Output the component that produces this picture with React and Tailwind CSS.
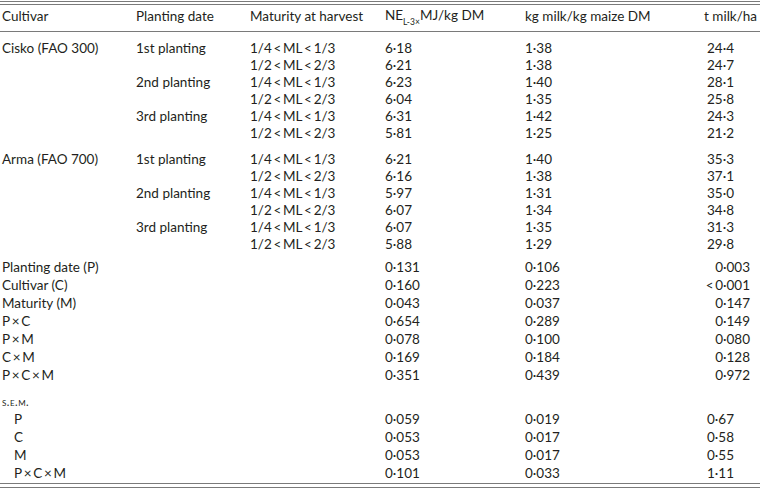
import React from "react";

const cols = ["w-[136px] pl-[2px]", "w-[114px]", "w-[135px]", "w-[140px]", "w-[174px]", "w-[61px]"];

const lt = "\u2009<\u2009";
const q1 = `1/4${lt}ML${lt}1/3`;
const q2 = `1/2${lt}ML${lt}2/3`;
const x = "\u2009×\u2009";

const blocks = [
  {
    cultivar: "Cisko (FAO 300)",
    rows: [
      ["1st planting", q1, "6·18", "1·38", "24·4"],
      ["", q2, "6·21", "1·38", "24·7"],
      ["2nd planting", q1, "6·23", "1·40", "28·1"],
      ["", q2, "6·04", "1·35", "25·8"],
      ["3rd planting", q1, "6·31", "1·42", "24·3"],
      ["", q2, "5·81", "1·25", "21·2"],
    ],
  },
  {
    cultivar: "Arma (FAO 700)",
    rows: [
      ["1st planting", q1, "6·21", "1·40", "35·3"],
      ["", q2, "6·16", "1·38", "37·1"],
      ["2nd planting", q1, "5·97", "1·31", "35·0"],
      ["", q2, "6·07", "1·34", "34·8"],
      ["3rd planting", q1, "6·07", "1·35", "31·3"],
      ["", q2, "5·88", "1·29", "29·8"],
    ],
  },
];

const pvals = [
  ["Planting date (P)", "0·131", "0·106", "0·003"],
  ["Cultivar (C)", "0·160", "0·223", "<\u20090·001"],
  ["Maturity (M)", "0·043", "0·037", "0·147"],
  [`P${x}C`, "0·654", "0·289", "0·149"],
  [`P${x}M`, "0·078", "0·100", "0·080"],
  [`C${x}M`, "0·169", "0·184", "0·128"],
  [`P${x}C${x}M`, "0·351", "0·439", "0·972"],
];

const sem = [
  ["P", "0·059", "0·019", "0·67"],
  ["C", "0·053", "0·017", "0·58"],
  ["M", "0·053", "0·017", "0·55"],
  [`P${x}C${x}M`, "0·101", "0·033", "1·11"],
];

function Row({ cells, h = "h-[17px]", lastRight = false }) {
  return (
    <div className={`flex items-center ${h}`}>
      {cells.map((c, i) => (
        <div
          key={i}
          className={`${cols[i]} whitespace-nowrap ${i === 5 ? (lastRight ? "text-right pr-[10px]" : "pl-[8px]") : ""}`}
        >
          {c}
        </div>
      ))}
    </div>
  );
}

export default function App() {
  return (
    <div
      className="w-[760px] h-[488px] bg-white text-[13.5px] leading-[17px] text-[#231f20] overflow-hidden"
      style={{ fontFamily: "Lato, 'Open Sans', sans-serif" }}
    >
      <div className="pt-[1px]">
        <div className="border-t border-[#7a7a7a]" />
        <div className="mt-[2px] border-t border-[#7a7a7a]" />
      </div>
      <div className="flex items-center h-[27px] pb-[4px] border-b border-[#7a7a7a]">
        <div className={cols[0]}>Cultivar</div>
        <div className={cols[1]}>Planting date</div>
        <div className={cols[2]}>Maturity at harvest</div>
        <div className={`${cols[3]} whitespace-nowrap`}>
          NE<sub className="text-[8.5px] align-[-3px] leading-none">L-3×</sub>MJ/kg DM
        </div>
        <div className={cols[4]}>kg milk/kg maize DM</div>
        <div className={`${cols[5]} whitespace-nowrap pl-[5px]`}>t milk/ha</div>
      </div>

      <div className="pt-[8px]">
        {blocks.map((b, bi) => (
          <div key={bi} className={bi > 0 ? "mt-[9px]" : ""}>
            {b.rows.map((r, ri) => (
              <Row key={ri} cells={[ri === 0 ? b.cultivar : "", ...r]} />
            ))}
          </div>
        ))}
      </div>

      <div className="mt-[5px]">
        {pvals.map((r, i) => (
          <Row key={i} h="h-[18px]" lastRight cells={[r[0], "", "", r[1], r[2], r[3]]} />
        ))}
      </div>

      <div className="mt-[8px]">
        <div className="flex items-center h-[18px] pl-[2px] text-[11px] tracking-[0.5px]" style={{ fontVariant: "small-caps" }}>
          s.e.m.
        </div>
        {sem.map((r, i) => (
          <Row key={i} h="h-[18px]" cells={[<span className="pl-[12px]">{r[0]}</span>, "", "", r[1], r[2], r[3]]} />
        ))}
      </div>

      <div className="mt-[1px]">
        <div className="border-t border-[#7a7a7a]" />
        <div className="mt-[3px] border-t border-[#7a7a7a]" />
      </div>
    </div>
  );
}
